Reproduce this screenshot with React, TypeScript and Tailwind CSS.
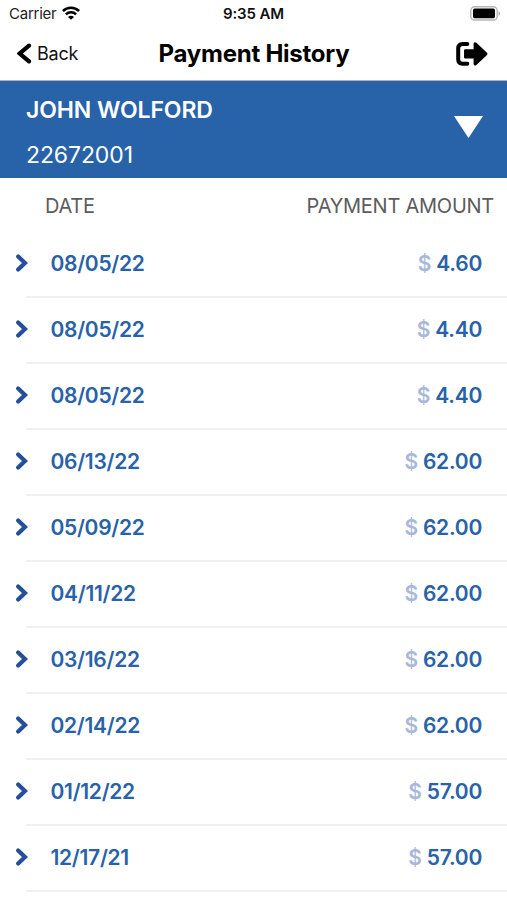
interface Payment {
  date: string
  amount: string
}

const payments: Payment[] = [
  { date: '08/05/22', amount: '4.60' },
  { date: '08/05/22', amount: '4.40' },
  { date: '08/05/22', amount: '4.40' },
  { date: '06/13/22', amount: '62.00' },
  { date: '05/09/22', amount: '62.00' },
  { date: '04/11/22', amount: '62.00' },
  { date: '03/16/22', amount: '62.00' },
  { date: '02/14/22', amount: '62.00' },
  { date: '01/12/22', amount: '57.00' },
  { date: '12/17/21', amount: '57.00' },
]

function WifiIcon() {
  return (
    <svg width="18" height="14" viewBox="0 0 18 14" fill="none" stroke="#000" strokeWidth="2.6" className="-mt-px">
      <path d="M0.9 5C5.5 0.6 12.5 0.6 17.1 5" />
      <path d="M3.9 8.4C6.8 5.6 11.2 5.6 14.1 8.4" />
      <path d="M9 13.8L6 10.9C7.8 9.3 10.2 9.3 12 10.9Z" fill="#000" stroke="none" />
    </svg>
  )
}

function BatteryIcon() {
  return (
    <svg width="31" height="15" viewBox="0 0 31 15" className="-mt-px">
      <rect x="0.8" y="0.8" width="26.4" height="13.2" rx="3.8" fill="#fff" stroke="#b5b5b5" strokeWidth="1.4" />
      <rect x="3" y="2.6" width="22" height="9.6" rx="1.6" fill="#000" />
      <path d="M28.6 5.2C30.6 6 30.6 9 28.6 9.8Z" fill="#a8a8a8" />
    </svg>
  )
}

function ExitIcon() {
  return (
    <svg width="32" height="26" viewBox="0 0 32 26">
      <path d="M11.3 3H6.7Q2.2 3 2.2 7.5V18.3Q2.2 22.8 6.7 22.8H11.3" fill="none" stroke="#000" strokeWidth="4" strokeLinecap="round" strokeLinejoin="round" />
      <path d="M9.4 8.2H17.6V2.6Q18.2 0.4 20.4 1.8L31 11.8Q32 12.9 31 14L20.4 24Q18.2 25.4 17.6 23.2V17.6H9.4Q8 17.6 8 16.2V9.6Q8 8.2 9.4 8.2Z" fill="#000" />
    </svg>
  )
}

export default function App() {
  return (
    <div className="h-[900px] w-full overflow-hidden bg-white font-['Inter',sans-serif] text-black">
      {/* Status bar */}
      <div className="grid h-[27px] grid-cols-3 items-center pl-[9px] pr-[6px]">
        <div className="flex items-center gap-[6px]">
          <span className="text-[15px] leading-none tracking-[-0.25px] text-[#222]">Carrier</span>
          <WifiIcon />
        </div>
        <span className="pr-[3px] text-center text-[15px] font-semibold leading-none tracking-[-0.1px] text-[#111]">9:35 AM</span>
        <div className="flex justify-end">
          <BatteryIcon />
        </div>
      </div>

      {/* Nav bar */}
      <div className="grid h-[54px] grid-cols-[120px_1fr_120px] items-center border-b border-[#a9b4c4] pl-[17px] pr-[19px]">
        <button className="flex items-center gap-[6px]">
          <svg width="15" height="21" viewBox="0 0 15 21" fill="none" stroke="#000" strokeWidth="4.2" strokeLinecap="round">
            <path d="M12 2.6L2.7 10.5L12 18.4" />
          </svg>
          <span className="-ml-px pt-px text-lg leading-none tracking-[-0.2px] text-[#111]">Back</span>
        </button>
        <h1 className="whitespace-nowrap pl-[3px] text-center text-2xl font-bold leading-none tracking-[-0.25px]">Payment History</h1>
        <div className="flex justify-end">
          <ExitIcon />
        </div>
      </div>

      {/* Account selector */}
      <div className="flex h-[97px] items-center justify-between bg-[#2862a8] pl-[26px] pr-6 text-white">
        <div className="pt-[6px]">
          <div className="text-[23px] font-semibold leading-[45px] tracking-[-0.1px]">JOHN WOLFORD</div>
          <div className="text-[23px] leading-[45px] tracking-[-0.1px]">22672001</div>
        </div>
        <svg width="29" height="22" viewBox="0 0 29 22" className="mb-[6px]">
          <path d="M0 0H29L14.5 22Z" fill="#fff" />
        </svg>
      </div>

      {/* Column titles */}
      <div className="flex h-[54px] items-center justify-between pl-[45px] pr-[13px] pt-px text-xl tracking-[-0.25px] text-[#5c5c5c]">
        <span>DATE</span>
        <span>PAYMENT AMOUNT</span>
      </div>

      {payments.map((p, i) => (
        <div key={i} className="flex h-[66px]">
          <div className="flex w-[26px] shrink-0 items-center pb-[4px] pl-[15px]">
            <svg width="13" height="18" viewBox="0 0 13 18" fill="none" stroke="#24509a" strokeWidth="4.2" strokeLinecap="round" className="shrink-0">
              <path d="M3.2 2.4L10 9L3.2 15.6" />
            </svg>
          </div>
          <div className="flex flex-1 items-center justify-between border-b-2 border-[#f0f0f0] pl-[24.5px] pr-[25px] text-[21px] font-semibold text-[#2862a8]">
            <span className="tracking-[-0.3px]">{p.date}</span>
            <span className="tracking-[-0.25px]">
              <span className="text-[#a9b8d8]">$</span> {p.amount}
            </span>
          </div>
        </div>
      ))}
    </div>
  )
}
